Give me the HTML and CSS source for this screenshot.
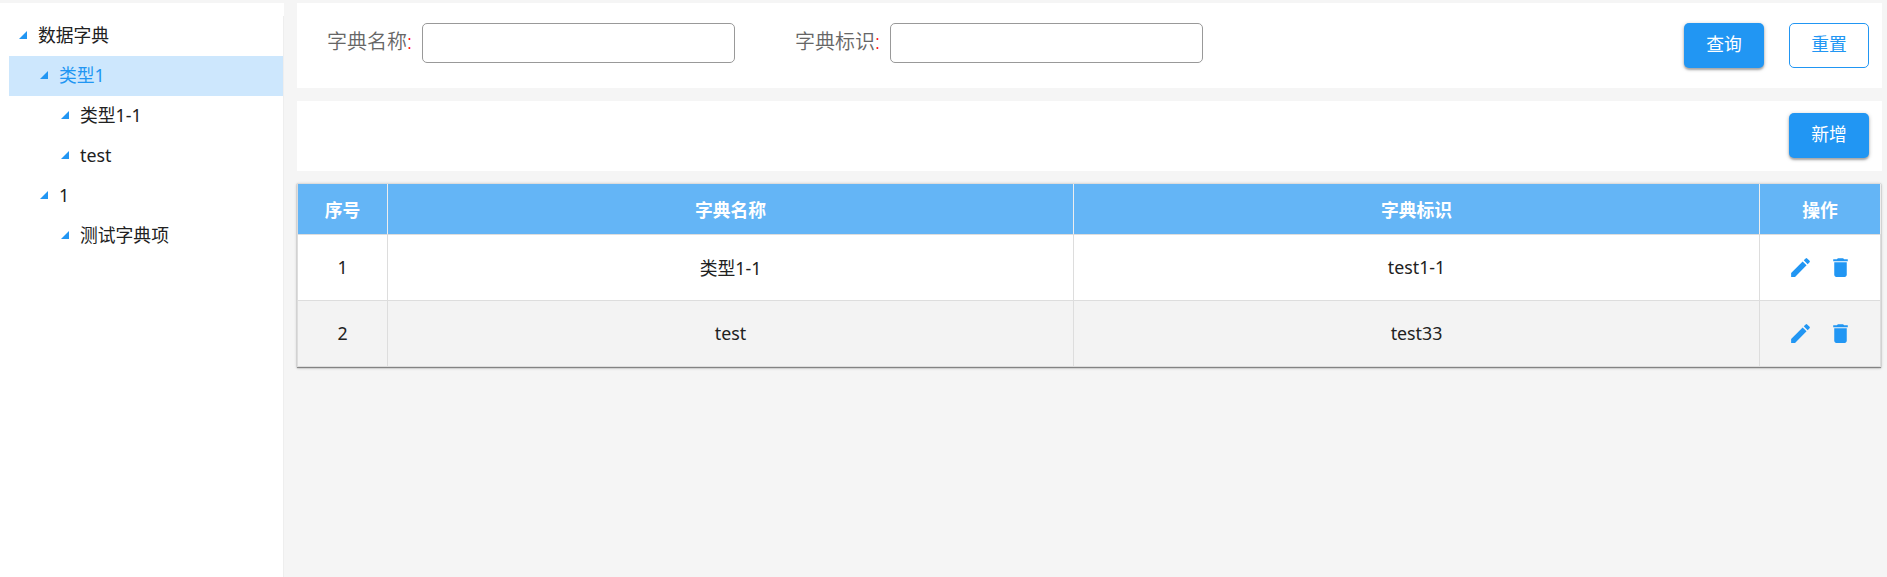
FILE: index.html
```html
<!DOCTYPE html>
<html lang="zh-CN">
<head>
<meta charset="utf-8">
<title>数据字典</title>
<link rel="stylesheet" href="styles.css">
</head>
<body>
<svg class="sprite" aria-hidden="true">
  <symbol id="arrow" viewBox="0 0 8 8"><path d="M8 0v8H0z"/></symbol>
  <symbol id="edit" viewBox="0 0 24 24"><path d="M3 17.25V21h3.75L17.81 9.94l-3.75-3.75L3 17.25zM20.71 7.04a1 1 0 0 0 0-1.41l-2.34-2.34a1 1 0 0 0-1.41 0l-1.83 1.83 3.75 3.75 1.83-1.83z"/></symbol>
  <symbol id="delete" viewBox="0 0 24 24"><path d="M6 19c0 1.1.9 2 2 2h8c1.1 0 2-.9 2-2V7H6v12zM19 4h-3.5l-1-1h-5l-1 1H5v2h14V4z"/></symbol>
</svg>
<div class="app">
  <nav class="sidebar">
    <ul class="tree">
      <li class="node"><svg class="arrow"><use href="#arrow"/></svg><span>数据字典</span></li>
      <li class="node level-1 active"><svg class="arrow"><use href="#arrow"/></svg><span>类型1</span></li>
      <li class="node level-2"><svg class="arrow"><use href="#arrow"/></svg><span>类型1-1</span></li>
      <li class="node level-2"><svg class="arrow"><use href="#arrow"/></svg><span>test</span></li>
      <li class="node level-1"><svg class="arrow"><use href="#arrow"/></svg><span>1</span></li>
      <li class="node level-2"><svg class="arrow"><use href="#arrow"/></svg><span>测试字典项</span></li>
    </ul>
  </nav>
  <main class="content">
    <form class="panel search">
      <label class="field"><span class="label">字典名称<i class="colon">:</i></span><input class="input" type="text"></label>
      <label class="field"><span class="label">字典标识<i class="colon">:</i></span><input class="input" type="text"></label>
      <div class="buttons">
        <button class="btn primary" type="button">查询</button>
        <button class="btn outline" type="button">重置</button>
      </div>
    </form>
    <div class="panel toolbar">
      <button class="btn primary" type="button">新增</button>
    </div>
    <div class="table">
      <div class="row head"><div class="cell">序号</div><div class="cell">字典名称</div><div class="cell">字典标识</div><div class="cell">操作</div></div>
      <div class="row"><div class="cell">1</div><div class="cell">类型1-1</div><div class="cell">test1-1</div><div class="cell actions"><svg class="icon"><use href="#edit"/></svg><svg class="icon"><use href="#delete"/></svg></div></div>
      <div class="row striped"><div class="cell">2</div><div class="cell">test</div><div class="cell">test33</div><div class="cell actions"><svg class="icon"><use href="#edit"/></svg><svg class="icon"><use href="#delete"/></svg></div></div>
    </div>
  </main>
</div>
</body>
</html>
```

FILE: styles.css
```css
* { box-sizing: border-box; }

body {
  margin: 0;
  background: #f5f5f5;
  color: #212121;
  font-family: "Noto Sans", "Noto Sans CJK SC", sans-serif;
  font-size: 17.8px;
  overflow: hidden;
}

.sprite { display: none; }

.app {
  display: flex;
  gap: 13px;
  height: 577px;
  padding: 3px 5px 0 0;
}

.sidebar {
  width: 284px;
  flex: none;
  padding: 13px 0 0 9px;
  background: #fff;
}

.tree {
  height: 100%;
  margin: 0;
  padding: 0;
  list-style: none;
  border-right: 1px solid #eee;
}

.node {
  display: flex;
  align-items: center;
  gap: 11px;
  height: 40px;
  padding: 0 0 2px 10px;
  line-height: 38px;
}

.level-1 { padding-left: 31px; }
.level-2 { padding-left: 52px; }

.active {
  background: #cde7fd;
  color: #2196f3;
}

.arrow {
  width: 8px;
  height: 8px;
  fill: #2196f3;
}

.content {
  flex: 1;
  min-width: 0;
}

.panel {
  display: flex;
  background: #fff;
}

.search {
  height: 85px;
  padding: 20px 13px 0 30px;
  gap: 60px;
}

.field {
  display: flex;
  width: 408px;
  justify-content: space-between;
}

.label {
  font-size: 20px;
  font-weight: 350;
  line-height: 37px;
  color: #666;
  white-space: nowrap;
}

.colon {
  color: #f00;
  font-style: normal;
}

.input {
  width: 313px;
  height: 40px;
  padding: 0 10px;
  border: 1px solid #999;
  border-radius: 5px;
  background: #fff;
  font: inherit;
}

.buttons {
  display: flex;
  gap: 25px;
  margin-left: auto;
}

.btn {
  width: 80px;
  height: 45px;
  padding: 0 0 4px;
  border: 0;
  border-radius: 5px;
  font: inherit;
  line-height: 24px;
}

.primary {
  background: #2196f3;
  color: #fff;
  box-shadow: 0 2px 2px rgba(0, 0, 0, .24), 0 1px 4px rgba(0, 0, 0, .24);
}

.outline {
  border: 1px solid #2196f3;
  background: #fff;
  color: #2196f3;
}

.toolbar {
  height: 70px;
  margin-top: 13px;
  padding: 12px 13px 0 0;
  justify-content: flex-end;
}

.table {
  margin: 12px 1px 0 0;
  border: 1px solid #ddd;
  border-right-width: 0;
  background: #ddd;
  box-shadow: 0 1px 1px rgba(0, 0, 0, .38), 0 1px 3px rgba(0, 0, 0, .22);
}

.row {
  display: grid;
  grid-template-columns: 89px 1fr 1fr 120px;
  column-gap: 1px;
  padding-right: 1px;
  height: 65px;
  margin-top: 1px;
}

.cell {
  display: flex;
  align-items: center;
  justify-content: center;
  padding-bottom: 2px;
  background: #fff;
}

.head {
  height: 50px;
  margin-top: 0;
  background: #eee;
  color: #fff;
  font-weight: 700;
}

.head .cell {
  padding-bottom: 0;
  background: #64b5f6;
}

.striped .cell { background: #f3f3f3; }

.cell.actions {
  gap: 15px;
  padding-bottom: 0;
}

.icon {
  width: 25px;
  height: 25px;
  fill: #2196f3;
}
```
